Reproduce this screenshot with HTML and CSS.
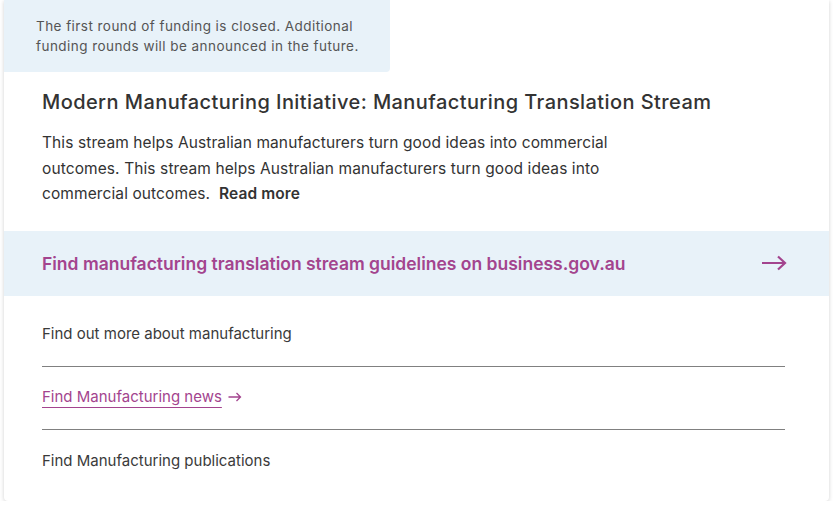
FILE: index.html
```html
<!DOCTYPE html>
<html lang="en">
<head>
<meta charset="utf-8">
<link rel="stylesheet" href="styles.css">
</head>
<body>
<article class="card">
  <div class="notice">The first round of funding is closed. Additional funding rounds will be announced in the future.</div>
  <div class="intro">
    <h2 class="title">Modern Manufacturing Initiative: Manufacturing Translation Stream</h2>
    <p class="desc">This stream helps Australian manufacturers turn good ideas into commercial outcomes. This stream helps Australian manufacturers turn good ideas into commercial outcomes.&nbsp; <a class="more" href="#">Read more</a></p>
  </div>
  <a class="cta" href="#">
    <span>Find manufacturing translation stream guidelines on business.gov.au</span>
    <svg class="cta-arrow" width="26" height="16" viewBox="0 0 26 16"><path d="M1 8H24M17 1.5L24 8L17 14.5" fill="none" stroke="currentColor" stroke-width="2.2"/></svg>
  </a>
  <ul class="links">
    <li class="link-item">Find out more about manufacturing</li>
    <li class="link-item"><a class="link" href="#">Find Manufacturing news</a><svg class="link-arrow" width="14" height="10" viewBox="0 0 14 10"><path d="M0.5 5H12.5M8.5 1L12.5 5L8.5 9" fill="none" stroke="currentColor" stroke-width="1.3"/></svg></li>
    <li class="link-item">Find Manufacturing publications</li>
  </ul>
</article>
</body>
</html>
```

FILE: styles.css
```css
* { box-sizing: border-box; }
html, body { margin: 0; padding: 0; background: #fff; }
body {
  padding: 0 4px;
  font-family: Inter, "Noto Sans", sans-serif;
  color: #333;
}
.card {
  width: 825px;
  height: 501px;
  background: #fff;
  border-radius: 0 0 4px 4px;
  box-shadow: 0 1px 4px rgba(0,0,0,0.18);
  display: flex;
  flex-direction: column;
}
.notice {
  width: 386px;
  height: 72px;
  background: #e8f2f9;
  border-radius: 0 0 4px 0;
  padding: 16px 16px 0 32px;
  font-size: 13.5px;
  line-height: 20px;
  color: #555;
  letter-spacing: 0.45px;
}
.intro {
  padding: 17px 38px 0 38px;
}
.title {
  margin: 0;
  font-size: 20px;
  font-weight: 500;
  line-height: 26px;
  color: #333;
  letter-spacing: 0.42px;
}
.desc {
  margin: 15px 0 0;
  width: 600px;
  font-size: 15.5px;
  line-height: 25.6px;
  color: #333;
  letter-spacing: 0.1px;
}
.more {
  color: #333;
  font-weight: 600;
  text-decoration: none;
}
.cta {
  margin-top: 24px;
  height: 65px;
  background: #e8f2f9;
  display: flex;
  align-items: center;
  justify-content: space-between;
  padding: 0 42px 0 38px;
  color: #a3448e;
  font-size: 17.5px;
  font-weight: 600;
  text-decoration: none;
}
.cta-arrow { display: block; }
.links {
  list-style: none;
  margin: 0;
  padding: 28px 44px 0 38px;
}
.link-item {
  display: flex;
  align-items: center;
  height: 63px;
  padding-bottom: 2px;
  font-size: 15px;
  color: #3a3a3a;
  border-bottom: 1px solid #808080;
}
.link-item:first-child { height: 43px; padding-bottom: 6px; align-items: flex-start; }
.link-item:last-child { border-bottom: none; }
.link {
  color: #a3448e;
  text-decoration: underline;
  text-underline-offset: 5px;
  text-decoration-thickness: 1px;
}
.link-arrow { margin-left: 6px; color: #a3448e; }
```
